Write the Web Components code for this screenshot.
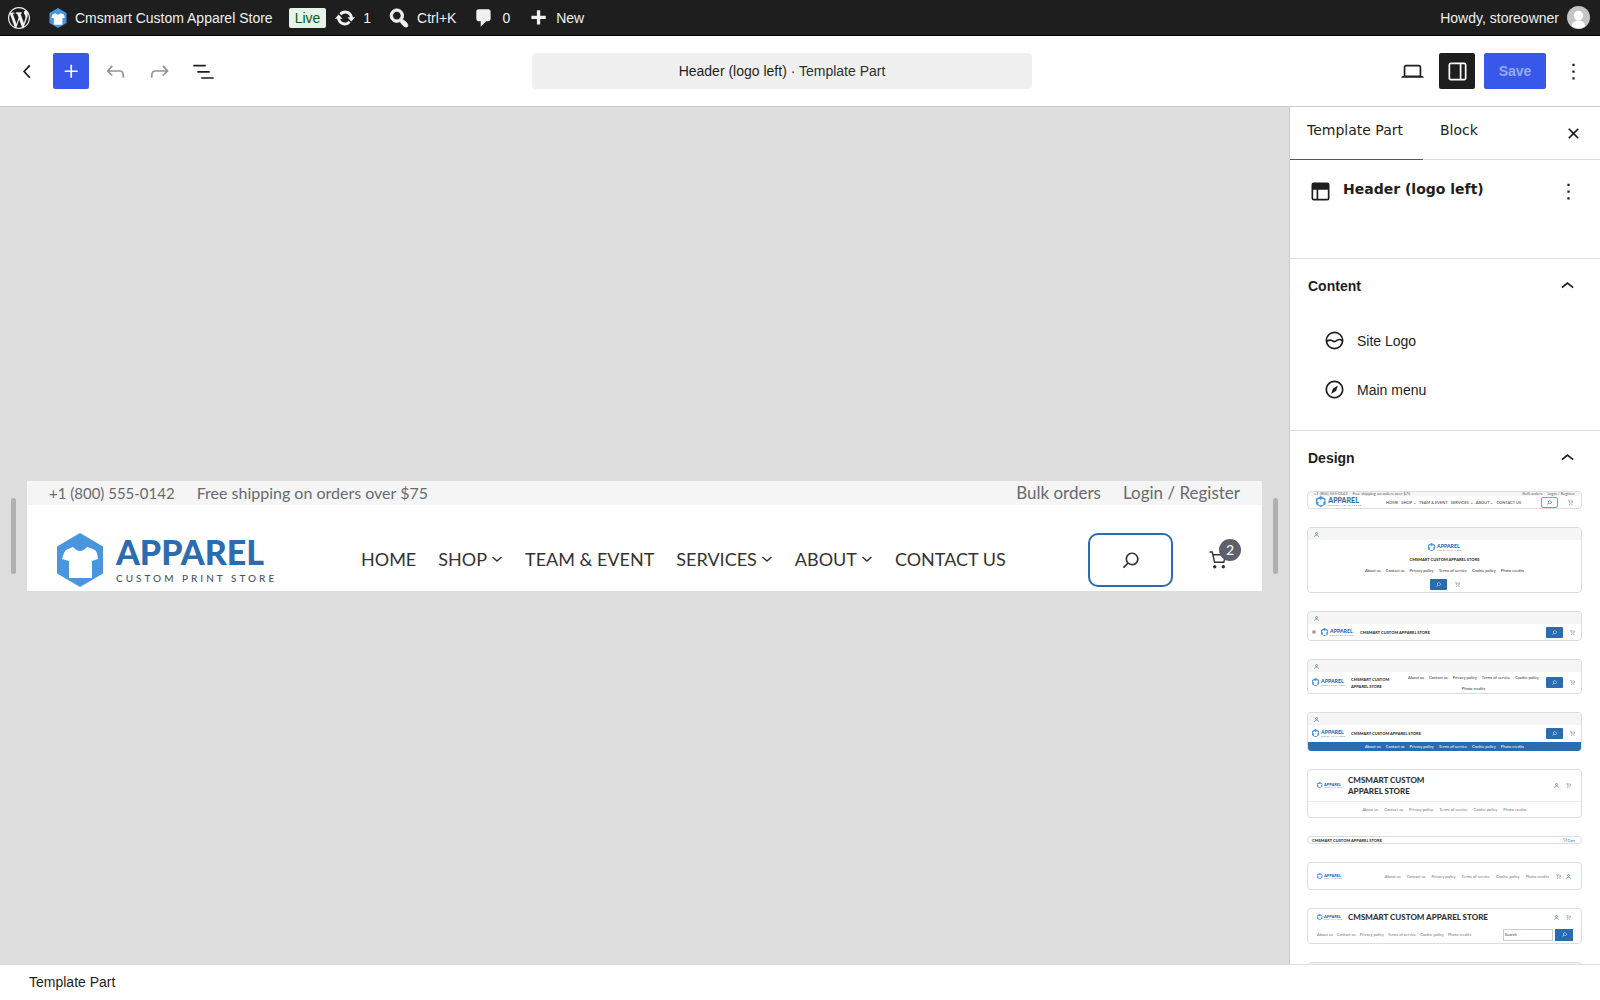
<!DOCTYPE html>
<html lang="en">
<head>
<meta charset="utf-8">
<title>Header (logo left) · Template Part</title>
<style>
  body { margin: 0; font-family: "Liberation Sans", Arial, sans-serif; font-size: 14px; color: #1e1e1e; }
</style>
</head>
<body>
<site-editor></site-editor>

<script>
const ICONS = {
  wordpress: ['0 0 20 20', '<path d="M20 10c0-5.51-4.49-10-10-10C4.48 0 0 4.49 0 10c0 5.52 4.48 10 10 10 5.51 0 10-4.48 10-10zM7.78 15.37L4.37 6.22c.55-.02 1.17-.08 1.17-.08.5-.06.44-1.13-.06-1.11 0 0-1.45.11-2.37.11-.18 0-.37 0-.58-.01C4.12 2.69 6.87 1.11 10 1.11c2.33 0 4.45.87 6.05 2.34-.68-.11-1.65.39-1.65 1.58 0 .74.45 1.36.9 2.1.35.61.55 1.36.55 2.46 0 1.49-1.4 5-1.4 5l-3.03-8.37c.54-.02.82-.17.82-.17.5-.05.44-1.25-.06-1.22 0 0-1.44.12-2.38.12-.87 0-2.33-.12-2.33-.12-.5-.03-.56 1.2-.06 1.22l.92.08 1.26 3.41zM17.41 10c.24-.64.74-1.87.43-4.25.7 1.29 1.05 2.71 1.05 4.25 0 3.29-1.73 6.24-4.4 7.78.97-2.59 1.94-5.2 2.92-7.78zM6.1 18.09C3.12 16.65 1.11 13.53 1.11 10c0-1.3.23-2.48.72-3.59C3.25 10.3 4.67 14.2 6.1 18.09zm4.03-6.63l2.58 6.98c-.86.29-1.76.45-2.71.45-.79 0-1.57-.11-2.29-.33.81-2.38 1.62-4.74 2.42-7.1z"/>'],
  update: ['0 0 20 20', '<path d="M10.2 3.28c3.53 0 6.43 2.61 6.92 6h2.08l-3.5 4-3.5-4h2.32c-.45-1.97-2.21-3.45-4.32-3.45-1.45 0-2.73.71-3.54 1.78L4.95 5.66C6.23 4.2 8.11 3.28 10.2 3.28zm-.4 13.44c-3.52 0-6.43-2.61-6.92-6H.8l3.5-4c1.17 1.33 2.33 2.67 3.5 4H5.48c.45 1.97 2.21 3.45 4.32 3.45 1.45 0 2.73-.71 3.54-1.78l1.71 1.95c-1.28 1.46-3.15 2.38-5.25 2.38z"/>'],
  find: ['1 1 18 18', '<path stroke="currentColor" stroke-width=".7" d="M12.14 4.18c1.87 1.87 2.11 4.75.72 6.89.12.1.22.21.36.31.2.16.47.36.81.59.34.24.56.39.66.47.42.31.73.57.94.78.32.32.6.65.84 1 .25.35.44.69.59 1.04.14.35.21.68.18 1-.02.32-.14.59-.36.81s-.49.34-.81.36c-.31.02-.65-.04-.99-.19-.35-.14-.7-.34-1.04-.59-.35-.24-.68-.52-1-.84-.21-.21-.47-.52-.77-.93-.1-.13-.25-.35-.47-.66-.22-.32-.4-.57-.56-.78-.16-.2-.29-.35-.44-.5-2.07 1.09-4.69.76-6.44-.98-2.14-2.15-2.14-5.64 0-7.78 2.15-2.15 5.63-2.15 7.78 0zm-1.41 6.36c1.36-1.37 1.36-3.58 0-4.95-1.37-1.37-3.59-1.37-4.95 0-1.37 1.37-1.37 3.58 0 4.95 1.36 1.37 3.58 1.37 4.95 0z"/>'],
  comment: ['0 0 20 20', '<path d="M5 2h9c1.1 0 2 .9 2 2v7c0 1.1-.9 2-2 2h-2l-5 5v-5H5c-1.1 0-2-.9-2-2V4c0-1.1.9-2 2-2z"/>'],
  add: ['0 0 20 20', '<path d="M17 8v3h-5v5H9v-5H4V8h5V3h3v5h5z"/>'],
  back: ['0 0 24 24', '<path d="M14.6 7l-1.2-1L8 12l5.4 6 1.2-1-4.6-5z"/>'],
  plus: ['0 0 24 24', '<path d="M11 12.5V17.5H12.5V12.5H17.5V11H12.5V6H11V11H6V12.5H11Z"/>'],
  undo: ['0 0 24 24', '<path d="M18.3 11.7c-.6-.6-1.4-.9-2.3-.9H6.7l2.9-3.3-1.1-1-4.5 5L8.5 16l1-1-2.7-2.7H16c.5 0 .9.2 1.3.5 1 1 1 3.4 1 4.5v.3h1.5v-.2c0-1.5 0-4.3-1.5-5.7z"/>'],
  redo: ['0 0 24 24', '<path d="M15.6 6.5l-1.1 1 2.9 3.3H8c-.9 0-1.7.3-2.3.9-1.4 1.5-1.4 4.2-1.4 5.6v.2h1.5v-.3c0-1.1 0-3.5 1-4.5.3-.3.7-.5 1.3-.5h9.2L14.5 15l1.1 1.1 4.6-4.6-4.6-5z"/>'],
  list: ['0 0 24 24', '<path d="M3 6h11v1.5H3V6Zm3.5 5.5h11V13h-11v-1.5ZM21 17H10v1.5h11V17Z"/>'],
  desktop: ['0 0 24 24', '<path d="M20.5 16h-.7V8c0-1.1-.9-2-2-2H6.2c-1.1 0-2 .9-2 2v8h-.7c-.8 0-1.5.7-1.5 1.5h20c0-.8-.7-1.5-1.5-1.5zM5.7 8c0-.3.2-.5.5-.5h11.6c.3 0 .5.2.5.5v7.6H5.7V8z"/>'],
  drawer: ['0 0 24 24', '<path d="M18 4H6c-1.1 0-2 .9-2 2v12c0 1.1.9 2 2 2h12c1.1 0 2-.9 2-2V6c0-1.1-.9-2-2-2zm-4 14.5H6c-.3 0-.5-.2-.5-.5V6c0-.3.2-.5.5-.5h8v13zm4.5-.5c0 .3-.2.5-.5.5h-2.5v-13H18c.3 0 .5.2.5.5v12z"/>'],
  more: ['0 0 24 24', '<path d="M13 19h-2v-2h2v2zm0-6h-2v-2h2v2zm0-6h-2V5h2v2z"/>'],
  close: ['0 0 24 24', '<path d="M12 13.06l3.712 3.713 1.061-1.06L13.061 12l3.712-3.712-1.06-1.06L12 10.938 8.288 7.227l-1.061 1.06L10.939 12l-3.712 3.712 1.06 1.061L12 13.061z"/>'],
  up: ['0 0 24 24', '<path d="M6.5 12.4L12 8l5.5 4.4-.9 1.2L12 10l-4.5 3.6-1-1.2z"/>'],
  layout: ['0 0 24 24', '<path fill-rule="evenodd" d="M18.5 10.5H10v8h8a.5.5 0 00.5-.5v-7.5zm-10 0h-3V18a.5.5 0 00.5.5h2.5v-8zM6 4h12a2 2 0 012 2v12a2 2 0 01-2 2H6a2 2 0 01-2-2V6a2 2 0 012-2z"/>'],
  logo: ['0 0 24 24', '<g fill="none" stroke="currentColor" stroke-width="1.5"><circle cx="12" cy="12" r="7.25"/><path d="M4.8 12.9C6.800 11.800 8.200 11.200 9.400 11.900C10.600 12.600 11.400 13.500 12.800 12.700C14.200 11.900 15.200 10.900 16.500 11.100C17.700 11.200 18.300 11.900 19.200 12.300"/></g>'],
  compass: ['0 0 24 24', '<path d="M12 4c-4.4 0-8 3.6-8 8s3.600 8 8 8 8-3.600 8-8-3.600-8-8-8zm0 14.500c-3.600 0-6.500-2.900-6.500-6.500S8.400 5.500 12 5.500s6.500 2.900 6.500 6.500-2.900 6.500-6.500 6.500zM9 16l4.500-3L15 8.400l-4.500 3L9 16z"/>'],
  search: ['0 0 24 24', '<path d="M13 5c-3.300 0-6 2.700-6 6 0 1.400.5 2.700 1.300 3.700l-3.800 3.800 1.100 1.100 3.800-3.800c1 .8 2.300 1.300 3.700 1.300 3.300 0 6-2.700 6-6S16.300 5 13 5zm0 10.500c-2.500 0-4.500-2-4.500-4.500s2-4.500 4.500-4.500 4.500 2 4.500 4.500-2 4.500-4.500 4.500z"/>'],
  cart: ['0 0 18 18', '<path d="M.5 1h2.700l2.400 10.200h9.200l1.700-7.400H4" fill="none" stroke="currentColor" stroke-width="1.400"/><circle cx="5.700" cy="15.700" r="1.700"/><circle cx="14.300" cy="15.700" r="1.700"/>'],
  down: ['0 0 12 12', '<path d="M1.500 4l4.500 4 4.500-4" fill="none" stroke="currentColor" stroke-width="1.500"/>'],
  user: ['0 0 12 12', '<g fill="none" stroke="currentColor" stroke-width="1.500"><circle cx="6" cy="3.500" r="2.300"/><path d="M1.200 11.500C1.200 6 10.800 6 10.800 11.500"/></g>'],
  menu: ['0 0 12 12', '<path d="M1 2.500h10v1H1zM1 5.500h10v1H1zM1 8.500h10v1H1z"/>'],
  shirt: ['0 0 46 54', '<path fill="#4a96de" d="M23 0l23 13.500v27L23 54 0 40.500v-27z"/><path fill="#fff" d="M16 14q7 8 14 0l6 2q3 1 4 4l1 6-6 2v17H12V28l-7-2 2-6q1-3 4-4z"/>'],
  avatar: ['0 0 24 24', '<circle cx="12" cy="12" r="12" fill="#c4c4c4"/><circle cx="12" cy="10" r="5" fill="#fff"/><path fill="#fff" d="M5 21c0-8 14-8 14 0q-7 4.500-14 0z"/>']
};

function define(name, css, html) {
  customElements.define(name, class extends HTMLElement {
    constructor() {
      super();
      const t = document.createElement('template');
      t.innerHTML = `<style>*{box-sizing:border-box}button{font:inherit;color:inherit;background:none;border:0;padding:0;margin:0}a{color:inherit;text-decoration:none}${css}</style>${html}`;
      this.attachShadow({ mode: 'open' }).append(t.content.cloneNode(true));
    }
  });
}

customElements.define('ui-icon', class extends HTMLElement {
  connectedCallback() {
    if (this.shadowRoot) return;
    const [box, body] = ICONS[this.getAttribute('name')];
    this.attachShadow({ mode: 'open' }).innerHTML =
      `<style>:host{display:block;flex:none;width:27px;height:27px}svg{display:block;width:100%;height:100%}</style>
       <svg viewBox="${box}" fill="currentColor" aria-hidden="true">${body}</svg>`;
  }
});

/* Shop logo: scales with its width, so the previews can reuse it. */
define('apparel-logo', `
  :host { display: block; flex: none; width: 222px; }
  svg { display: block; width: 100%; overflow: visible; }
  .name { font: 900 34px Lato, sans-serif; fill: #2b6cb0; }
  .tag { font: 500 10px Lato, sans-serif; letter-spacing: 3px; fill: #4a5568; }
`, `
  <svg viewBox="0 0 222 54" role="img" aria-label="Apparel custom print store">
    <path fill="#4a96de" d="M23 0l23 13.500v27L23 54 0 40.500v-27z"/>
    <path fill="#fff" d="M16 14q7 8 14 0l6 2q3 1 4 4l1 6-6 2v17H12V28l-7-2 2-6q1-3 4-4z"/>
    <text class="name" x="59" y="32">APPAREL</text>
    <text class="tag" x="59" y="49">CUSTOM PRINT STORE</text>
  </svg>
`);

define('admin-bar', `
  :host { display: flex; align-items: center; height: 36px; padding: 0 10px 0 8px; background: #1e1e1e; border-bottom: 1px solid #000; color: #f0f0f1; }
  a { display: flex; align-items: center; gap: 7px; margin-right: 17px; white-space: nowrap; }
  ui-icon { width: 22px; height: 22px; }
  .home { margin-right: 19px; }
  .site { gap: 8px; margin-right: 16px; }
  .site ui-icon { width: 18px; height: 20px; }
  .live { padding: 0 6px; margin-right: 8px; line-height: 20px; border-radius: 2px; background: #e6f4e8; color: #005c12; }
  .me { gap: 8px; margin: 0 0 0 auto; }
  .me ui-icon { width: 23px; height: 23px; }
`, `
  <a href="#" class="home" aria-label="WordPress"><ui-icon name="wordpress"></ui-icon></a>
  <a href="#" class="site"><ui-icon name="shirt"></ui-icon><span>Cmsmart Custom Apparel Store</span></a>
  <a href="#" class="live">Live</a>
  <a href="#"><ui-icon name="update"></ui-icon><span>1</span></a>
  <a href="#"><ui-icon name="find"></ui-icon><span>Ctrl+K</span></a>
  <a href="#"><ui-icon name="comment"></ui-icon><span>0</span></a>
  <a href="#"><ui-icon name="add"></ui-icon><span>New</span></a>
  <a href="#" class="me"><span>Howdy, storeowner</span><ui-icon name="avatar"></ui-icon></a>
`);

define('editor-toolbar', `
  :host { display: grid; grid-template-columns: minmax(0, 1fr) 500px minmax(0, 1fr) 36px; align-items: center; height: 71px; background: #fff; border-bottom: 1px solid #ccc; }
  .group { display: flex; gap: 8px; padding: 0 9px; }
  .end { grid-column: 3 / 5; gap: 9px; justify-content: flex-end; }
  .group button { display: flex; align-items: center; justify-content: center; width: 36px; height: 36px; border-radius: 2px; }
  .group .primary { background: #3858e9; color: #fff; }
  .group .off { color: #949494; }
  .group .on { background: #1e1e1e; color: #fff; }
  .group .save { width: 62px; background: #3858e9; color: #98abf5; font-weight: 700; }
  .title { height: 36px; border-radius: 4px; background: #f0f0f0; text-align: center; }
  .title span { color: #2f2f2f; }
`, `
  <div class="group">
    <button aria-label="Back"><ui-icon name="back"></ui-icon></button>
    <button class="primary" aria-label="Add block"><ui-icon name="plus"></ui-icon></button>
    <button class="off" aria-label="Undo"><ui-icon name="undo"></ui-icon></button>
    <button class="off" aria-label="Redo"><ui-icon name="redo"></ui-icon></button>
    <button aria-label="Document overview"><ui-icon name="list"></ui-icon></button>
  </div>
  <button class="title">Header (logo left) <span>· Template Part</span></button>
  <div class="group end">
    <button aria-label="View"><ui-icon name="desktop"></ui-icon></button>
    <button class="on" aria-label="Settings"><ui-icon name="drawer"></ui-icon></button>
    <button class="save">Save</button>
    <button aria-label="Options"><ui-icon name="more"></ui-icon></button>
  </div>
`);

define('shop-header', `
  :host { display: block; flex: 1; min-width: 0; background: #fff; font-family: Lato, sans-serif; }
  .top { display: flex; gap: 22px; height: 24px; padding: 0 22px; background: #f5f5f5; color: #666b70; font-size: 16px; line-height: 24px; white-space: nowrap; }
  .top .gap { flex: 1; }
  .top .phone { font-size: 15px; }
  .top a { font-size: 17px; }
  .main { display: flex; align-items: center; padding: 28px 21px 4px 30px; }
  nav { display: flex; gap: 22px; margin-left: 82px; font-size: 18px; line-height: 22px; padding-bottom: 2px; color: #333; white-space: nowrap; }
  nav a { display: flex; align-items: center; gap: 4px; }
  nav ui-icon { width: 12px; height: 12px; }
  .search { display: flex; align-items: center; justify-content: center; width: 85px; height: 54px; margin-left: auto; border: 2px solid #2b6cb0; border-radius: 10px; color: #333; }
  .search ui-icon { width: 26px; height: 26px; }
  .cart { position: relative; width: 32px; margin-left: 36px; color: #333; }
  .cart ui-icon { width: 18px; height: 18px; }
  .cart b { position: absolute; right: 0; bottom: 8px; width: 22px; line-height: 22px; border-radius: 50%; background: #5d5f6b; color: #fff; font-size: 14px; font-weight: 400; text-align: center; }
`, `
  <div class="top"><span class="phone">+1 (800) 555-0142</span><span>Free shipping on orders over $75</span><span class="gap"></span><a href="#">Bulk orders</a><a href="#">Login / Register</a></div>
  <div class="main">
    <apparel-logo></apparel-logo>
    <nav>
      <a href="#">HOME</a><a href="#">SHOP<ui-icon name="down"></ui-icon></a><a href="#">TEAM &amp; EVENT</a>
      <a href="#">SERVICES<ui-icon name="down"></ui-icon></a><a href="#">ABOUT<ui-icon name="down"></ui-icon></a><a href="#">CONTACT US</a>
    </nav>
    <button class="search" aria-label="Search"><ui-icon name="search"></ui-icon></button>
    <button class="cart" aria-label="Cart"><ui-icon name="cart"></ui-icon><b>2</b></button>
  </div>
`);

define('editor-canvas', `
  :host { display: flex; align-items: center; gap: 11px; min-width: 0; padding: 0 11px; background: #ddd; }
  .handle { width: 5px; height: 76px; border-radius: 3px; background: #b0b0b0; }
`, `
  <button class="handle" aria-label="Resize left"></button>
  <shop-header></shop-header>
  <button class="handle" aria-label="Resize right"></button>
`);

define('panel-section', `
  :host { display: block; border-top: 1px solid #ddd; }
  h2 { margin: 0; font-size: 14px; }
  button { display: flex; align-items: center; justify-content: space-between; width: 100%; height: 54px; padding: 0 19px 0 18px; font-weight: 700; }
`, `
  <h2><button aria-expanded="true"><slot name="title"></slot><ui-icon name="up"></ui-icon></button></h2>
  <slot></slot>
`);

const pages = ['About us', 'Contact us', 'Privacy policy', 'Terms of service', 'Cookie policy', 'Photo credits'];
const menu = (cls = '') => `<div class="menu ${cls}">${pages.map(p => `<span>${p}</span>`).join('')}</div>`;
const find = '<span class="find"><ui-icon name="search"></ui-icon></span>';
const cart = '<ui-icon class="cart" name="cart"></ui-icon>';
const user = '<ui-icon class="user" name="user"></ui-icon>';
const strip = `<div class="strip">${user}</div>`;
const name = '<strong>CMSMART CUSTOM APPAREL STORE</strong>';

define('pattern-list', `
  :host { display: flex; flex-direction: column; gap: 18px; padding: 6px 18px 6px 17px; font: 4px/5px Lato, sans-serif; color: #333; white-space: nowrap; }
  .card { display: flex; flex-direction: column; flex: none; overflow: hidden; border: 1px solid #ddd; border-radius: 4px; background: #fff; }
  ui-icon { width: 4px; height: 4px; }
  .cart { width: 5px; height: 5px; color: #555; }
  .find ui-icon { width: 7px; height: 7px; }
  .user { width: 5px; height: 5px; color: #2b6cb0; }
  strong { font-weight: 900; }
  .push { margin-left: auto; }
  .strip { flex: none; display: flex; align-items: center; height: 12px; padding: 0 6px; background: #f5f5f5; }
  .row { display: flex; flex: 1; align-items: center; gap: 5px; padding: 0 6px 0 4px; }
  .row > .cart { margin-left: 2px; }
  .wide { padding: 0 10px 0 9px; gap: 5px; }
  .menu { display: flex; gap: 5px; }
  .center { justify-content: center; }
  .wrap { flex-wrap: wrap; width: 135px; row-gap: 6px; justify-content: center; }
  .two { line-height: 7px; }
  .soft { color: #777; gap: 6px; }
  .find { display: flex; align-items: center; justify-content: center; width: 17px; height: 11px; border-radius: 1px; background: #2b6cb0; color: #fff; }
  .ghost { border: 1px solid #6f9fd0; border-radius: 2px; background: #fff; color: #333; }
  apparel-logo { width: 34px; }
  .wide apparel-logo { width: 26px; }
  .big { font: 900 8px/11px Lato, sans-serif; }
  .h18 { height: 18px; } .h66 { height: 66px; } .h30 { height: 30px; } .h35 { height: 35px; } .h39 { height: 39px; border-bottom: 0; }
  .h49 { height: 49px; } .h8 { height: 8px; } .h28 { height: 28px; } .h36 { height: 36px; }
  .top { display: flex; flex: none; gap: 5px; height: 4px; padding: 0 6px; line-height: 3px; background: #f5f5f5; color: #666; }
  .first { padding: 0 8px; gap: 8px; }
  .first apparel-logo { width: 46px; }
  .first .menu { margin-left: 16px; gap: 3px; }
  .stack { display: flex; flex-direction: column; align-items: center; gap: 6px; padding-top: 3px; }
  .pair { display: flex; align-items: center; gap: 8px; }
  .bar { flex: none; height: 9px; align-items: center; background: #2b6cb0; color: #fff; }
  .foot { flex: none; height: 16px; align-items: center; border-top: 1px solid #eee; }
  .tight { gap: 4px; }
  .link { display: flex; align-items: center; color: #2b6cb0; }
  .form { padding-right: 8px; }
  input { width: 50px; height: 12px; padding: 0 1px; border: 1px solid #ccc; border-radius: 0; font: inherit; color: #333; background: #fff; }
  .join { display: flex; gap: 2px; }
  .join .find { width: 18px; height: 12px; border-radius: 0; }
`, `
  <div class="card h18">
    <div class="top"><span>+1 (800) 555-0142</span><span>Free shipping on orders over $75</span><span class="push">Bulk orders</span><span>Login / Register</span></div>
    <div class="row first"><apparel-logo></apparel-logo><div class="menu"><span>HOME</span><span>SHOP ⌄</span><span>TEAM &amp; EVENT</span><span>SERVICES ⌄</span><span>ABOUT ⌄</span><span>CONTACT US</span></div><span class="find ghost push"><ui-icon name="search"></ui-icon></span>${cart}</div>
  </div>
  <div class="card h66">${strip}<div class="stack"><apparel-logo></apparel-logo>${name}${menu()}<div class="pair">${find}${cart}</div></div></div>
  <div class="card h30">${strip}<div class="row"><ui-icon name="menu"></ui-icon><apparel-logo></apparel-logo>${name}<span class="push">${find}</span>${cart}</div></div>
  <div class="card h35">${strip}<div class="row"><apparel-logo></apparel-logo><strong class="two">CMSMART CUSTOM<br>APPAREL STORE</strong>${menu('wrap push')}${find}${cart}</div></div>
  <div class="card h39">${strip}<div class="row"><apparel-logo></apparel-logo>${name}<span class="push">${find}</span>${cart}</div>${menu('center bar')}</div>
  <div class="card h49"><div class="row wide"><apparel-logo></apparel-logo><strong class="big">CMSMART CUSTOM<br>APPAREL STORE</strong><span class="push">${user}</span>${cart}</div>${menu('center foot soft')}</div>
  <div class="card h8"><div class="row">${name}<span class="link push"><ui-icon name="cart"></ui-icon>Cart</span></div></div>
  <div class="card h28"><div class="row wide"><apparel-logo></apparel-logo>${menu('soft push')}${cart}${user}</div></div>
  <div class="card h36"><div class="row wide"><apparel-logo></apparel-logo><strong class="big">CMSMART CUSTOM APPAREL STORE</strong><span class="push">${user}</span>${cart}</div><div class="row wide form">${menu('soft tight')}<div class="join push"><input aria-label="Search" value="Search">${find}</div></div></div>
  <div class="card h30">${strip}</div>
`);

define('settings-sidebar', `
  :host { display: flex; flex-direction: column; overflow: hidden; border-left: 1px solid #ccc; background: #fff; }
  .tabs { display: flex; flex: none; height: 53px; padding-right: 9px; align-items: stretch; border-bottom: 1px solid #ddd; }
  .tabs button { padding: 0 20px 6px 17px; font-family: "DejaVu Sans", sans-serif; }
  .tabs .active { margin-bottom: -1px; border-bottom: 1px solid #555; }
  .tabs .x { display: flex; align-items: center; width: 36px; padding: 0; margin-left: auto; justify-content: center; }
  .card { display: flex; flex: none; align-items: flex-start; height: 98px; padding: 18px 18px 0 17px; }
  .card h2 { flex: 1; margin: 0; padding: 2px 0 0 9px; font: 700 14px/18px "DejaVu Sans", sans-serif; }
  panel-section { flex: none; }
  ul { margin: 0; padding: 3px 31px 16px; list-style: none; }
  li button { display: flex; align-items: center; gap: 9px; height: 49px; }
`, `
  <div class="tabs"><button class="active">Template Part</button><button>Block</button><button class="x" aria-label="Close"><ui-icon name="close"></ui-icon></button></div>
  <div class="card"><ui-icon name="layout"></ui-icon><h2>Header (logo left)</h2><button aria-label="Actions"><ui-icon name="more"></ui-icon></button></div>
  <panel-section><span slot="title">Content</span>
    <ul><li><button><ui-icon name="logo"></ui-icon>Site Logo</button></li><li><button><ui-icon name="compass"></ui-icon>Main menu</button></li></ul>
  </panel-section>
  <panel-section><span slot="title">Design</span><pattern-list></pattern-list></panel-section>
`);

define('site-editor', `
  :host { display: grid; grid-template: auto auto minmax(0, 1fr) auto / minmax(0, 1fr) 311px; height: 100vh; background: #fff; }
  admin-bar, editor-toolbar, footer { grid-column: 1 / -1; }
  footer { height: 36px; padding-left: 29px; border-top: 1px solid #ddd; line-height: 34px; box-sizing: border-box; }
  admin-bar, editor-toolbar { box-sizing: border-box; }
`, `
  <admin-bar></admin-bar>
  <editor-toolbar></editor-toolbar>
  <editor-canvas></editor-canvas>
  <settings-sidebar></settings-sidebar>
  <footer>Template Part</footer>
`);
</script>
</body>
</html>
